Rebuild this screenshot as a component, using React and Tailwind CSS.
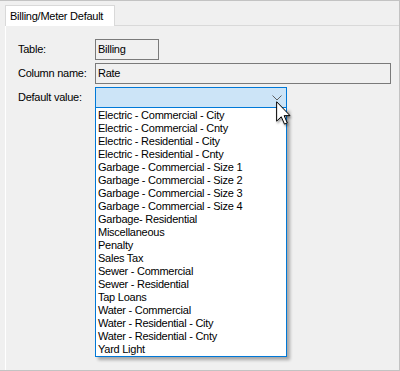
import React from 'react';

const options = [
  'Electric - Commercial - City',
  'Electric - Commercial - Cnty',
  'Electric - Residential - City',
  'Electric - Residential - Cnty',
  'Garbage - Commercial - Size 1',
  'Garbage - Commercial - Size 2',
  'Garbage - Commercial - Size 3',
  'Garbage - Commercial - Size 4',
  'Garbage- Residential',
  'Miscellaneous',
  'Penalty',
  'Sales Tax',
  'Sewer - Commercial',
  'Sewer - Residential',
  'Tap Loans',
  'Water - Commercial',
  'Water - Residential - City',
  'Water - Residential - Cnty',
  'Yard Light',
];

function Cursor() {
  return (
    <svg width="15" height="24" viewBox="0 0 12 19" className="drop-shadow-[1px_2px_1px_rgba(0,0,0,0.35)]">
      <path
        d="M0.5 0.5 L0.5 16 L4.2 12.5 L6.8 18.4 L9 17.4 L6.5 11.6 L11.2 11.6 Z"
        fill="#fff"
        stroke="#000"
        strokeWidth="0.8"
        strokeLinejoin="miter"
      />
    </svg>
  );
}

export default function App() {
  return (
    <div className="relative w-[400px] h-[371px] bg-[#f0f0f0] border-t border-r border-b border-[#c3c3c3] flex flex-col pt-[4px] font-['Liberation_Sans',Arial,sans-serif] text-[11px] text-black tracking-[-0.25px] overflow-hidden">
      {/* tab strip */}
      <div className="flex h-[21px] pl-[5px]">
        <div className="w-[110px] bg-white border-l border-t border-r border-[#d9d9d9] flex items-center pl-[4px]">
          Billing/Meter Default
        </div>
        <div className="flex-1 border-b border-[#d9d9d9]" />
      </div>

      {/* tab page */}
      <div className="flex-1 ml-[5px] border-l border-[#ffffff] pt-[13px] pl-[12px]">
        <div className="grid grid-cols-[77px_auto] gap-y-[3px] items-center">
          <div>Table:</div>
          <div className="w-[64px] h-[21px] border border-[#7a7a7a] flex items-center pl-[2px]">Billing</div>

          <div>Column name:</div>
          <div className="w-[296px] h-[21px] border border-[#7a7a7a] flex items-center pl-[2px]">Rate</div>

          <div>Default value:</div>
          <div className="relative w-[192px] h-[21px] border border-[#0078d7] bg-[#cce4f7] flex items-center justify-end pr-[4px]">
            <svg width="10" height="6" viewBox="0 0 10 6">
              <path d="M0.5 0.5 L5 5 L9.5 0.5" fill="none" stroke="#606060" strokeWidth="1" />
            </svg>

            {/* open dropdown list */}
            <div className="absolute left-[-1px] top-[20px] w-[192px] h-[249px] bg-white border-l border-r border-b border-[#0078d7] pt-[1px] shadow-[3px_3px_3px_rgba(0,0,0,0.3)]">
              {options.map((o) => (
                <div key={o} className="leading-[13px] h-[13px] pl-[2px] whitespace-nowrap">
                  {o}
                </div>
              ))}
            </div>
          </div>
        </div>
      </div>

      <div className="absolute left-[276px] top-[100px]">
        <Cursor />
      </div>
    </div>
  );
}
